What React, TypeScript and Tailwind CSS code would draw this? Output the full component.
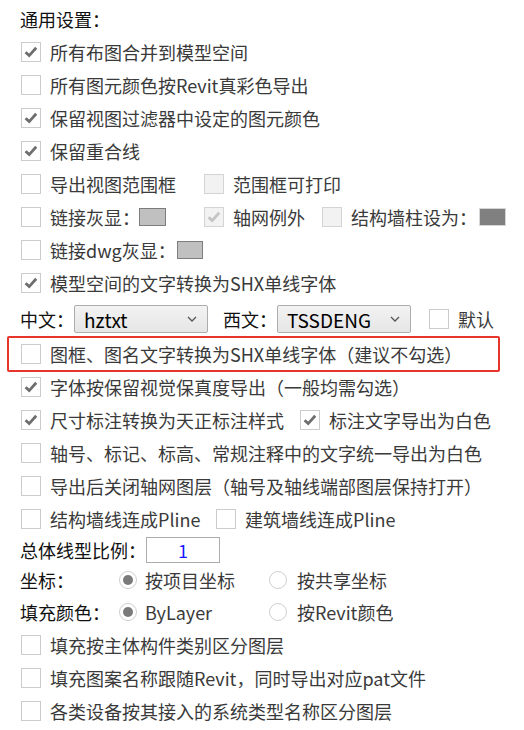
import React from "react";

const font = "font-['Microsoft_YaHei','Noto_Sans_CJK_SC',sans-serif]";

type BoxProps = { checked?: boolean; disabled?: boolean; className?: string };

const CheckBox: React.FC<BoxProps> = ({ checked, disabled, className = "" }) => (
  <span
    className={`flex h-[20px] w-[20px] shrink-0 items-center justify-center border ${
      disabled ? "border-[#d4d4d4] bg-[#f2f2f2]" : "border-[#cccccc] bg-white"
    } ${className}`}
  >
    {checked && (
      <svg width="16" height="16" viewBox="0 0 16 16">
        <path
          d="M2.6 8.2 L6.2 11.6 L13.2 3.8"
          fill="none"
          stroke={disabled ? "#c4c4c4" : "#6e6e6e"}
          strokeWidth="2.8"
        />
      </svg>
    )}
  </span>
);

const Radio: React.FC<{ checked?: boolean }> = ({ checked }) => (
  <span className="flex h-[18px] w-[18px] shrink-0 items-center justify-center rounded-full border border-[#cfcfcf] bg-white">
    {checked && <span className="h-[10px] w-[10px] rounded-full bg-[#7a7a7a]" />}
  </span>
);

const Select: React.FC<{ value: string }> = ({ value }) => (
  <div className="flex h-[28px] w-[134px] items-center justify-between rounded-[2px] border border-[#adadad] bg-gradient-to-b from-[#f3f3f3] to-[#e6e6e6] pl-[9px] pr-[10px]">
    <span className="text-[19px] leading-none text-black">{value}</span>
    <svg width="10" height="6" viewBox="0 0 10 6">
      <path d="M1 1 L5 5 L9 1" fill="none" stroke="#555" strokeWidth="1.3" />
    </svg>
  </div>
);

const Row: React.FC<{ children: React.ReactNode; h?: string }> = ({ children, h = "h-[33px]" }) => (
  <div className={`flex ${h} items-center pl-[21px]`}>{children}</div>
);

const Label: React.FC<{ children: React.ReactNode; className?: string }> = ({ children, className = "" }) => (
  <span className={`ml-[9px] whitespace-nowrap text-[#3a3a3a] ${className}`}>{children}</span>
);

const App: React.FC = () => {
  return (
    <div className={`h-[730px] w-[524px] overflow-hidden bg-white pt-[2px] text-[18px] leading-[24px] ${font}`}>
      <div className="flex h-[33px] items-center pl-[20px] text-[#111]">通用设置：</div>

      <Row>
        <CheckBox checked />
        <Label>所有布图合并到模型空间</Label>
      </Row>
      <Row>
        <CheckBox />
        <Label>所有图元颜色按Revit真彩色导出</Label>
      </Row>
      <Row>
        <CheckBox checked />
        <Label>保留视图过滤器中设定的图元颜色</Label>
      </Row>
      <Row>
        <CheckBox checked />
        <Label>保留重合线</Label>
      </Row>
      <Row>
        <CheckBox />
        <Label className="w-[154px]">导出视图范围框</Label>
        <CheckBox disabled />
        <Label>范围框可打印</Label>
      </Row>
      <Row>
        <CheckBox />
        <Label className="w-[89px]">链接灰显：</Label>
        <span className="h-[18px] w-[27px] border border-[#7d7d7d] bg-[#c0c0c0]" />
        <CheckBox checked disabled className="ml-[38px]" />
        <Label className="w-[89px]">轴网例外</Label>
        <CheckBox disabled />
        <Label className="w-[128px]">结构墙柱设为：</Label>
        <span className="h-[18px] w-[27px] border border-[#d6d6d6] bg-[#808080]" />
      </Row>
      <Row>
        <CheckBox />
        <Label className="w-[127px]">链接dwg灰显：</Label>
        <span className="h-[18px] w-[26px] border border-[#7d7d7d] bg-[#c0c0c0]" />
      </Row>
      <Row>
        <CheckBox checked />
        <Label>模型空间的文字转换为SHX单线字体</Label>
      </Row>

      <div className="flex h-[37px] items-center pl-[20px] pt-[3px] text-[#111]">
        <span className="w-[54px]">中文：</span>
        <Select value="hztxt" />
        <span className="ml-[15px] w-[54px]">西文：</span>
        <Select value="TSSDENG" />
        <CheckBox className="ml-[18px]" />
        <Label>默认</Label>
      </div>

      <div className="ml-[7px] flex h-[36px] w-[493px] items-center rounded-[2px] border-2 border-[#e8352c] pl-[12px]">
        <CheckBox />
        <Label>图框、图名文字转换为SHX单线字体（建议不勾选）</Label>
      </div>

      <div className="-mt-[2px]">
        <Row>
          <CheckBox checked />
          <Label>字体按保留视觉保真度导出（一般均需勾选）</Label>
        </Row>
        <Row>
          <CheckBox checked />
          <Label className="w-[250px]">尺寸标注转换为天正标注样式</Label>
          <CheckBox checked />
          <Label>标注文字导出为白色</Label>
        </Row>
        <Row>
          <CheckBox />
          <Label>轴号、标记、标高、常规注释中的文字统一导出为白色</Label>
        </Row>
        <Row>
          <CheckBox />
          <Label>导出后关闭轴网图层（轴号及轴线端部图层保持打开）</Label>
        </Row>
        <Row>
          <CheckBox />
          <Label className="w-[166px]">结构墙线连成Pline</Label>
          <CheckBox />
          <Label>建筑墙线连成Pline</Label>
        </Row>
      </div>

      <div className="flex h-[30px] items-center pl-[20px] text-[#111]">
        <span className="w-[126px]">总体线型比例：</span>
        <div className="flex h-[26px] w-[74px] items-center justify-center border border-[#adadad] text-[#1a1aff]">
          1
        </div>
      </div>
      <div className="flex h-[30px] items-center pl-[20px] text-[#111]">
        <span className="w-[99px]">坐标：</span>
        <div className="flex w-[150px] items-center">
          <Radio checked />
          <span className="ml-[8px] text-[#3a3a3a]">按项目坐标</span>
        </div>
        <Radio />
        <span className="ml-[10px] text-[#3a3a3a]">按共享坐标</span>
      </div>
      <div className="flex h-[33px] items-center pl-[20px] text-[#111]">
        <span className="w-[99px]">填充颜色：</span>
        <div className="flex w-[150px] items-center">
          <Radio checked />
          <span className="ml-[8px] text-[#3a3a3a]">ByLayer</span>
        </div>
        <Radio />
        <span className="ml-[10px] text-[#3a3a3a]">按Revit颜色</span>
      </div>

      <Row>
        <CheckBox />
        <Label>填充按主体构件类别区分图层</Label>
      </Row>
      <Row>
        <CheckBox />
        <Label>填充图案名称跟随Revit，同时导出对应pat文件</Label>
      </Row>
      <Row>
        <CheckBox />
        <Label>各类设备按其接入的系统类型名称区分图层</Label>
      </Row>
    </div>
  );
};

export default App;
